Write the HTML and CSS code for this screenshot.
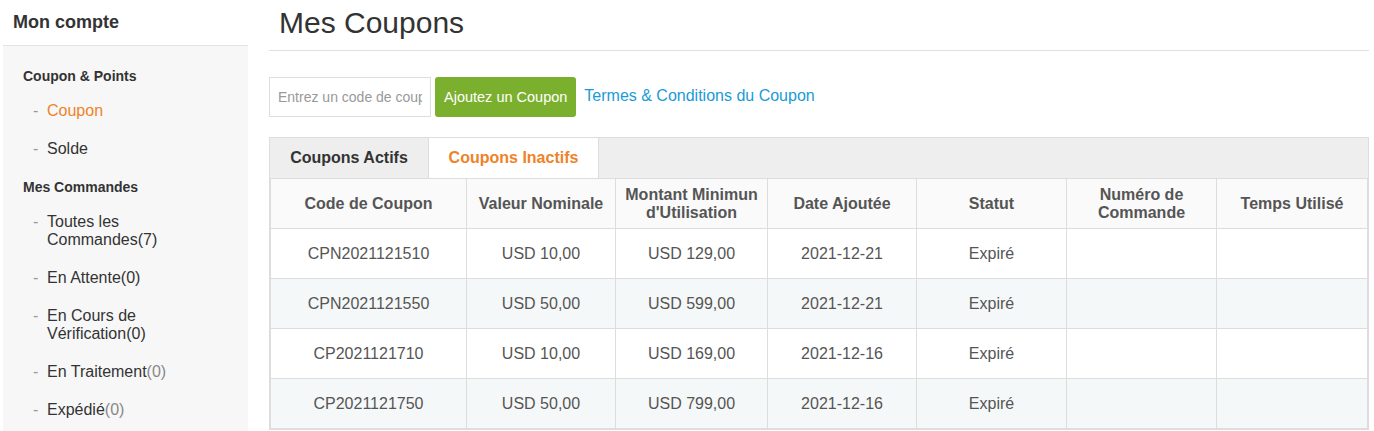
FILE: index.html
```html
<!DOCTYPE html>
<html>
<head>
	<meta charset="utf-8">
	<link rel="stylesheet" href="styles.css">
</head>
<body>
<div class="page">
	<div class="sidebar">
		<div class="side-title">Mon compte</div>
		<div class="side-menu">
			<div class="side-head">Coupon &amp; Points</div>
			<a class="side-item active" href="#"><span class="dash">-</span><span class="label">Coupon</span></a>
			<a class="side-item" href="#"><span class="dash">-</span><span class="label">Solde</span></a>
			<div class="side-head">Mes Commandes</div>
			<a class="side-item" href="#"><span class="dash">-</span><span class="label">Toutes les Commandes(7)</span></a>
			<a class="side-item" href="#"><span class="dash">-</span><span class="label">En Attente(0)</span></a>
			<a class="side-item" href="#"><span class="dash">-</span><span class="label">En Cours de Vérification(0)</span></a>
			<a class="side-item" href="#"><span class="dash">-</span><span class="label">En Traitement<span class="count">(0)</span></span></a>
			<a class="side-item" href="#"><span class="dash">-</span><span class="label">Expédié<span class="count">(0)</span></span></a>
		</div>
	</div>

	<div class="main">
		<h1 class="title">Mes Coupons</h1>

		<div class="add-row">
			<input class="code-input" type="text" placeholder="Entrez un code de coupon">
			<button class="add-btn">Ajoutez un Coupon</button>
			<a class="terms" href="#">Termes &amp; Conditions du Coupon</a>
		</div>

		<div class="tabs">
			<div class="tab">Coupons Actifs</div>
			<div class="tab current">Coupons Inactifs</div>
		</div>

		<table class="coupons">
			<tr>
				<th class="c1">Code de Coupon</th>
				<th class="c2">Valeur Nominale</th>
				<th class="c3">Montant Minimun d'Utilisation</th>
				<th class="c4">Date Ajoutée</th>
				<th class="c5">Statut</th>
				<th class="c6">Numéro de Commande</th>
				<th class="c7">Temps Utilisé</th>
			</tr>
			<tr>
				<td>CPN2021121510</td><td>USD 10,00</td><td>USD 129,00</td><td>2021-12-21</td><td>Expiré</td><td></td><td></td>
			</tr>
			<tr>
				<td>CPN2021121550</td><td>USD 50,00</td><td>USD 599,00</td><td>2021-12-21</td><td>Expiré</td><td></td><td></td>
			</tr>
			<tr>
				<td>CP2021121710</td><td>USD 10,00</td><td>USD 169,00</td><td>2021-12-16</td><td>Expiré</td><td></td><td></td>
			</tr>
			<tr>
				<td>CP2021121750</td><td>USD 50,00</td><td>USD 799,00</td><td>2021-12-16</td><td>Expiré</td><td></td><td></td>
			</tr>
		</table>
	</div>
</div>
</body>
</html>
```

FILE: styles.css
```css
body {
  margin: 0;
  font-family: "Liberation Sans", Arial, sans-serif;
  color: #333;
  background: #fff;
}

.page {
  display: flex;
  align-items: flex-start;
}

/* sidebar */
.sidebar {
  width: 245px;
  margin-left: 3px;
  flex-shrink: 0;
}

.side-title {
  height: 45px;
  padding-left: 10px;
  font-size: 18px;
  font-weight: bold;
  line-height: 44px;
  border-bottom: 1px solid #e3e3e3;
}

.side-menu {
  background: #f7f7f7;
  padding: 11px 0 10px 20px;
  min-height: 400px;
}

.side-head {
  font-size: 14px;
  font-weight: bold;
  line-height: 18px;
  padding: 10px 0;
}

.side-item {
  display: flex;
  padding: 10px 0 10px 10px;
  font-size: 16px;
  line-height: 18px;
  color: #333;
  text-decoration: none;
}

.side-head + .side-item {
  padding-top: 7px;
}

.side-item .dash {
  width: 14px;
  color: #999;
}

.side-item .label {
  width: 130px;
}

.side-item.active .label {
  color: #f08227;
}

.side-item .count {
  color: #888;
}

/* main */
.main {
  flex: 1;
  margin-left: 21px;
  margin-right: 5px;
}

.title {
  margin: 0;
  height: 50px;
  padding-left: 10px;
  font-size: 30px;
  font-weight: normal;
  line-height: 46px;
  color: #333;
  border-bottom: 1px solid #e0e0e0;
}

.add-row {
  display: flex;
  align-items: center;
  margin-top: 26px;
  height: 40px;
}

.code-input {
  box-sizing: border-box;
  width: 162px;
  height: 40px;
  padding: 0 8px;
  border: 1px solid #ddd;
  font-family: inherit;
  font-size: 14px;
  color: #333;
  outline: none;
}

.code-input::placeholder {
  color: #999;
}

.add-btn {
  height: 40px;
  margin-left: 4px;
  margin-top: -1px;
  padding: 0 9px;
  border: none;
  border-radius: 3px;
  background: #7bb02e;
  color: #fff;
  font-family: inherit;
  font-size: 14.5px;
}

.terms {
  margin-left: 8px;
  margin-top: -2px;
  font-size: 16px;
  color: #1b9ad6;
  text-decoration: none;
}

/* tabs */
.tabs {
  display: flex;
  margin-top: 20px;
  height: 40px;
  background: #eee;
  border: 1px solid #ddd;
  border-bottom: none;
}

.tab {
  width: 158px;
  font-size: 16px;
  font-weight: bold;
  line-height: 40px;
  text-align: center;
  color: #333;
}

.tab.current {
  width: 169px;
  background: #fff;
  color: #f08227;
  border-left: 1px solid #ddd;
  border-right: 1px solid #ddd;
}

/* table */
.coupons {
  width: 100%;
  border-collapse: collapse;
  border: 2px solid #ddd;
  border-top-width: 1px;
  table-layout: fixed;
}

.coupons th,
.coupons td {
  height: 49px;
  padding: 0 4px;
  border: 1px solid #ddd;
  text-align: center;
  font-size: 16px;
  line-height: 18px;
  color: #555;
}

.coupons th {
  background: #fafafa;
  font-weight: bold;
}

.coupons tr:nth-child(odd) td {
  background: #f5f8f8;
}

.c1 { width: 187px; }
.c2 { width: 140px; }
.c3 { width: 143px; }
.c4 { width: 140px; }
.c5 { width: 141px; }
.c6 { width: 141px; }
```
